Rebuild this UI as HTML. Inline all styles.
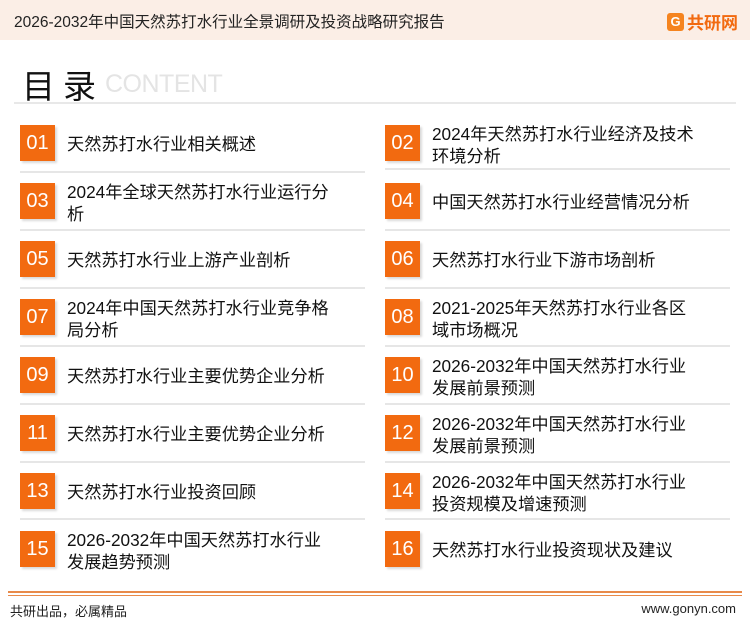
<!DOCTYPE html>
<html><head><meta charset="utf-8"><style>
*{margin:0;padding:0;box-sizing:border-box}
body{width:750px;height:622px;background:#fff;position:relative;overflow:hidden;font-family:"Liberation Sans","Noto Sans CJK SC",sans-serif;color:#111}
.hdr{position:absolute;left:0;top:0;width:750px;height:40px;background:#fbeee6}
.hdr .t{position:absolute;left:14px;top:10px;font-size:15.5px;color:#222}
.logo{position:absolute;right:12px;top:9px;font-size:17px;font-weight:bold;color:#f26a10;display:flex;align-items:center}
.logo i{display:inline-block;width:17px;height:18px;background:#f5841f;border-radius:3px;margin-right:3px;font-style:normal;color:#fff;font-size:13px;text-align:center;line-height:18px}
.ml{position:absolute;left:22px;top:60px;font-size:33px;color:#111;letter-spacing:8px}
.ct{position:absolute;left:105px;top:70px;font-size:25px;color:#e4e4e4;letter-spacing:-0.5px}
.hl{position:absolute;left:14px;top:102px;width:722px;height:2px;background:#e8e8e8}
.box{position:absolute;width:35px;height:36px;background:#f26a10;color:#fff;font-size:20px;text-align:center;line-height:36px;box-shadow:2px 2px 2px rgba(0,0,0,.15)}
.tx{position:absolute;font-size:17.2px;line-height:22px;color:#111;width:300px;white-space:nowrap}
.sep{position:absolute;height:2px;background:#e6e6e6}
.fl1{position:absolute;left:8px;top:591px;width:734px;height:2px;background:#e88a4a}
.fl2{position:absolute;left:8px;top:595px;width:734px;height:1px;background:#e88a4a}
.ft{position:absolute;top:601px;font-size:13px;color:#222}
</style></head><body>
<div class="hdr"><div class="t">2026-2032年中国天然苏打水行业全景调研及投资战略研究报告</div>
<div class="logo"><i>G</i>共研网</div></div>
<div class="ml">目录</div><div class="ct">CONTENT</div>
<div class="hl"></div>

<div class="box" style="left:20px;top:125px">01</div><div class="tx" style="left:67px;top:133px">天然苏打水行业相关概述</div>
<div class="box" style="left:385px;top:125px">02</div><div class="tx" style="left:432px;top:123px">2024年天然苏打水行业经济及技术<br>环境分析</div>
<div class="sep" style="left:20px;top:171px;width:345px"></div><div class="sep" style="left:385px;top:168px;width:345px"></div>

<div class="box" style="left:20px;top:183px">03</div><div class="tx" style="left:67px;top:181px">2024年全球天然苏打水行业运行分<br>析</div>
<div class="box" style="left:385px;top:183px">04</div><div class="tx" style="left:432px;top:191px">中国天然苏打水行业经营情况分析</div>
<div class="sep" style="left:20px;top:229px;width:345px"></div><div class="sep" style="left:385px;top:229px;width:345px"></div>

<div class="box" style="left:20px;top:241px">05</div><div class="tx" style="left:67px;top:249px">天然苏打水行业上游产业剖析</div>
<div class="box" style="left:385px;top:241px">06</div><div class="tx" style="left:432px;top:249px">天然苏打水行业下游市场剖析</div>
<div class="sep" style="left:20px;top:287px;width:345px"></div><div class="sep" style="left:385px;top:287px;width:345px"></div>

<div class="box" style="left:20px;top:299px">07</div><div class="tx" style="left:67px;top:297px">2024年中国天然苏打水行业竞争格<br>局分析</div>
<div class="box" style="left:385px;top:299px">08</div><div class="tx" style="left:432px;top:297px">2021-2025年天然苏打水行业各区<br>域市场概况</div>
<div class="sep" style="left:20px;top:345px;width:345px"></div><div class="sep" style="left:385px;top:345px;width:345px"></div>

<div class="box" style="left:20px;top:357px">09</div><div class="tx" style="left:67px;top:365px">天然苏打水行业主要优势企业分析</div>
<div class="box" style="left:385px;top:357px">10</div><div class="tx" style="left:432px;top:355px">2026-2032年中国天然苏打水行业<br>发展前景预测</div>
<div class="sep" style="left:20px;top:403px;width:345px"></div><div class="sep" style="left:385px;top:403px;width:345px"></div>

<div class="box" style="left:20px;top:415px">11</div><div class="tx" style="left:67px;top:423px">天然苏打水行业主要优势企业分析</div>
<div class="box" style="left:385px;top:415px">12</div><div class="tx" style="left:432px;top:413px">2026-2032年中国天然苏打水行业<br>发展前景预测</div>
<div class="sep" style="left:20px;top:461px;width:345px"></div><div class="sep" style="left:385px;top:461px;width:345px"></div>

<div class="box" style="left:20px;top:473px">13</div><div class="tx" style="left:67px;top:481px">天然苏打水行业投资回顾</div>
<div class="box" style="left:385px;top:473px">14</div><div class="tx" style="left:432px;top:471px">2026-2032年中国天然苏打水行业<br>投资规模及增速预测</div>
<div class="sep" style="left:20px;top:518px;width:345px"></div><div class="sep" style="left:385px;top:518px;width:345px"></div>

<div class="box" style="left:20px;top:531px">15</div><div class="tx" style="left:67px;top:529px">2026-2032年中国天然苏打水行业<br>发展趋势预测</div>
<div class="box" style="left:385px;top:531px">16</div><div class="tx" style="left:432px;top:539px">天然苏打水行业投资现状及建议</div>

<div class="fl1"></div><div class="fl2"></div>
<div class="ft" style="left:10px">共研出品，必属精品</div>
<div class="ft" style="right:14px">www.gonyn.com</div>
</body></html>
